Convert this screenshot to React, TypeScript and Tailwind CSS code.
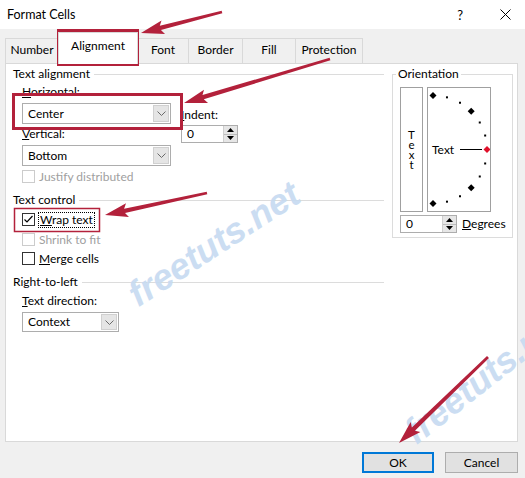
import React from "react";

const RED = "#b3213b";

function Chevron() {
  return (
    <svg width="9" height="5" viewBox="0 0 9 5">
      <path d="M0.5 0.5 L4.5 4.5 L8.5 0.5" fill="none" stroke="#6a6a6a" strokeWidth="1" />
    </svg>
  );
}

function Select({ value, w, h }: { value: string; w: string; h: string }) {
  return (
    <div className={`flex border border-[#adadad] bg-white ${w} ${h}`}>
      <div className="flex-1 flex items-center pl-[5px]">{value}</div>
      <div className="w-[16px] my-px mr-px bg-[#e5e5e5] border border-[#d0d0d0] flex items-center justify-center">
        <Chevron />
      </div>
    </div>
  );
}

function Spin() {
  return (
    <div className="flex h-[18px] w-[57px] border border-[#adadad] bg-white">
      <div className="flex-1 flex items-center pl-[5px]">0</div>
      <div className="w-[14px] flex flex-col border-l border-[#cfcfcf] bg-[#e6e6e6]">
        <div className="flex-1 flex items-center justify-center border-b border-[#bdbdbd]">
          <svg width="7" height="4" viewBox="0 0 7 4">
            <path d="M0 4 L3.5 0 L7 4Z" fill="#000" />
          </svg>
        </div>
        <div className="flex-1 flex items-center justify-center">
          <svg width="7" height="4" viewBox="0 0 7 4">
            <path d="M0 0 L3.5 4 L7 0Z" fill="#000" />
          </svg>
        </div>
      </div>
    </div>
  );
}

function Check({ checked, disabled }: { checked?: boolean; disabled?: boolean }) {
  return (
    <div
      className={`w-[13px] h-[13px] shrink-0 border bg-white flex items-center justify-center ${
        disabled ? "border-[#cccccc]" : "border-[#333333]"
      }`}
    >
      {checked && (
        <svg width="11" height="11" viewBox="0 0 11 11">
          <path d="M1.5 5.5 L4 8 L9.5 2" fill="none" stroke="#000" strokeWidth="1.2" />
        </svg>
      )}
    </div>
  );
}

function Header({ children }: { children: React.ReactNode }) {
  return (
    <div className="flex items-center h-[16px]">
      <span>{children}</span>
      <div className="flex-1 h-px bg-[#dcdcdc] ml-[4px]" />
    </div>
  );
}

function arrowPoints(x1: number, y1: number, x2: number, y2: number) {
  const dx = x2 - x1;
  const dy = y2 - y1;
  const len = Math.hypot(dx, dy);
  const ux = dx / len;
  const uy = dy / len;
  const nx = -uy;
  const ny = ux;
  const H = 20;
  const W = 7;
  const bx = x2 - ux * H;
  const by = y2 - uy * H;
  const pts = [
    [x1 + nx * 1.4, y1 + ny * 1.4],
    [bx + nx * 2.2, by + ny * 2.2],
    [bx - ux * 3 + nx * W, by - uy * 3 + ny * W],
    [x2, y2],
    [bx - ux * 3 - nx * W, by - uy * 3 - ny * W],
    [bx - nx * 2.2, by - ny * 2.2],
    [x1 - nx * 1.4, y1 - ny * 1.4],
  ];
  return pts.map((p) => p.join(",")).join(" ");
}

function Dial() {
  const cx = 5;
  const cy = 61.5;
  const r = 54;
  const marks = [];
  for (let a = 90; a >= -90; a -= 15) {
    const rad = (a * Math.PI) / 180;
    const x = cx + r * Math.cos(rad);
    const y = cy - r * Math.sin(rad);
    if (a === 0) {
      marks.push(
        <polygon key={a} points={`${x},${y - 3.5} ${x + 3.5},${y} ${x},${y + 3.5} ${x - 3.5},${y}`} fill="#e0102a" />
      );
    } else if (a % 45 === 0) {
      marks.push(
        <polygon key={a} points={`${x},${y - 3.5} ${x + 3.5},${y} ${x},${y + 3.5} ${x - 3.5},${y}`} fill="#000" />
      );
    } else {
      marks.push(<rect key={a} x={x - 1} y={y - 1} width="2" height="2" fill="#000" />);
    }
  }
  return (
    <svg width="62" height="123" viewBox="0 0 62 123">
      {marks}
      <text x="4" y="65.5" fontSize="12" fill="#000" fontFamily="Lato, sans-serif">
        Text
      </text>
      <line x1="32" y1="61.5" x2="54" y2="61.5" stroke="#000" strokeWidth="1" />
    </svg>
  );
}

export default function App() {
  return (
    <div className="relative w-[525px] h-[478px] overflow-hidden bg-[#f0f0f0] text-[12px] leading-[16px] text-black font-['Lato','Noto_Sans',sans-serif]">
      {/* Title bar */}
      <div className="h-[29px] bg-white flex items-center pl-[7px]">
        <span className="text-[12.5px]">Format Cells</span>
        <span className="ml-auto text-[13px] mr-[37px]">?</span>
        <svg width="11" height="11" viewBox="0 0 11 11" className="mr-[14px]">
          <path d="M0.5 0.5 L10.5 10.5 M10.5 0.5 L0.5 10.5" stroke="#000" strokeWidth="1" />
        </svg>
      </div>

      {/* Tabs */}
      <div className="flex items-end pl-[5px] h-[34px]">
        <div className="w-[53px] h-[25px] border-t border-l border-[#d9d9d9] flex items-center justify-center pb-[2px]">Number</div>
        <div className="relative z-10 -mb-px w-[80px] h-[32px] bg-white border-t border-l border-r border-[#d9d9d9] flex items-center justify-center pb-[6px]">
          Alignment
        </div>
        <div className="w-[50px] h-[25px] border-t border-[#d9d9d9] flex items-center justify-center pb-[2px]">Font</div>
        <div className="w-[54px] h-[25px] border-t border-l border-[#d9d9d9] flex items-center justify-center pb-[2px]">Border</div>
        <div className="w-[53px] h-[25px] border-t border-l border-[#d9d9d9] flex items-center justify-center pb-[2px]">Fill</div>
        <div className="w-[68px] h-[25px] border-t border-l border-r border-[#d9d9d9] flex items-center justify-center pb-[2px]">Protection</div>
      </div>

      {/* Panel */}
      <div className="ml-[5px] w-[513px] h-[379px] bg-white border border-[#d9d9d9] flex">
        {/* Left column */}
        <div className="w-[379px] pl-[7px] pr-[1px] pt-[2px] flex flex-col">
          <Header>Text alignment</Header>
          <div className="flex pl-[9px] mt-[2px]">
            <div className="flex flex-col w-[149px]">
              <div className="h-[16px]">
                <u>H</u>orizontal:
              </div>
              <div className="mt-[3px]">
                <Select value="Center" w="w-[149px]" h="h-[21px]" />
              </div>
              <div className="h-[16px] mt-[2px]">
                <u>V</u>ertical:
              </div>
              <div className="mt-[3px]">
                <Select value="Bottom" w="w-[149px]" h="h-[21px]" />
              </div>
              <div className="flex items-center h-[13px] mt-[4px] gap-[4px] text-[#a0a0a0]">
                <Check disabled />
                <span>Justify distributed</span>
              </div>
            </div>
            <div className="flex flex-col ml-[10px] pt-[23px]">
              <div className="h-[16px]">
                <u>I</u>ndent:
              </div>
              <div className="mt-[2px]">
                <Spin />
              </div>
            </div>
          </div>

          <div className="mt-[9px]">
            <Header>Text control</Header>
          </div>
          <div className="flex flex-col pl-[9px]">
            <div className="flex items-center h-[13px] mt-[5px] gap-[3px]">
              <Check checked />
              <span className="border border-dotted border-black px-px leading-[14px]">
                <u>W</u>rap text
              </span>
            </div>
            <div className="flex items-center h-[13px] mt-[7px] gap-[4px] text-[#a0a0a0]">
              <Check disabled />
              <span>Shrink to fit</span>
            </div>
            <div className="flex items-center h-[13px] mt-[6px] gap-[4px]">
              <Check />
              <span>
                <u>M</u>erge cells
              </span>
            </div>
          </div>

          <div className="mt-[9px]">
            <Header>Right-to-left</Header>
          </div>
          <div className="flex flex-col pl-[9px]">
            <div className="h-[16px] mt-[3px]">
              <u>T</u>ext direction:
            </div>
            <div className="mt-[3px]">
              <Select value="Context" w="w-[97px]" h="h-[20px]" />
            </div>
          </div>
        </div>

        {/* Orientation */}
        <div className="relative ml-[7px] mt-[10px] w-[121px] h-[164px] border border-[#dcdcdc]">
          <span className="absolute -top-[9px] left-[3px] bg-white px-[2px]">Orientation</span>
          <div className="flex mt-[12px] ml-[7px] gap-[4px]">
            <div className="w-[23px] h-[125px] border border-[#a0a0a0] flex flex-col items-center justify-center text-[11.5px] leading-[10px]">
              <span>T</span>
              <span>e</span>
              <span>x</span>
              <span>t</span>
            </div>
            <div className="w-[64px] h-[125px] border border-[#a0a0a0]">
              <Dial />
            </div>
          </div>
          <div className="flex items-center ml-[7px] mt-[3px]">
            <Spin />
            <span className="ml-[5px]">
              <u>D</u>egrees
            </span>
          </div>
        </div>
      </div>

      {/* Buttons */}
      <div className="flex justify-end pr-[7px] mt-[10px] gap-[11px]">
        <div className="w-[72px] h-[21px] border-2 border-[#0078d7] bg-[#e1e1e1] flex items-center justify-center">OK</div>
        <div className="w-[73px] h-[21px] border border-[#adadad] bg-[#e1e1e1] flex items-center justify-center">Cancel</div>
      </div>

      {/* Watermarks */}
      <div className="absolute left-[214px] top-[244px] -translate-x-1/2 -translate-y-1/2 -rotate-[33deg] whitespace-nowrap text-[36px] leading-[36px] font-bold italic text-[#c6daf1] font-['Liberation_Sans',sans-serif] opacity-90">
        freetuts.net
      </div>
      <div className="absolute left-[420px] top-[414px] origin-[0_100%] -rotate-[38deg] whitespace-nowrap text-[36px] leading-[36px] font-bold italic text-[#c6daf1] font-['Liberation_Sans',sans-serif] opacity-90">
        freetuts.net
      </div>

      {/* Annotations */}
      <svg className="absolute inset-0 pointer-events-none" width="525" height="478" viewBox="0 0 525 478">
        <rect x="58.5" y="30.5" width="79" height="34" fill="none" stroke={RED} strokeWidth="3" />
        <rect x="13.5" y="94.5" width="168" height="34" fill="none" stroke={RED} strokeWidth="3" />
        <rect x="14.5" y="208.5" width="85" height="23" fill="none" stroke={RED} strokeWidth="1.5" />
        <polygon points={arrowPoints(222, 12, 141, 33)} fill={RED} />
        <polygon points={arrowPoints(330, 59, 184, 103)} fill={RED} />
        <polygon points={arrowPoints(207, 193, 105, 215)} fill={RED} />
        <polygon points={arrowPoints(488, 357, 399, 443)} fill={RED} />
      </svg>
    </div>
  );
}
